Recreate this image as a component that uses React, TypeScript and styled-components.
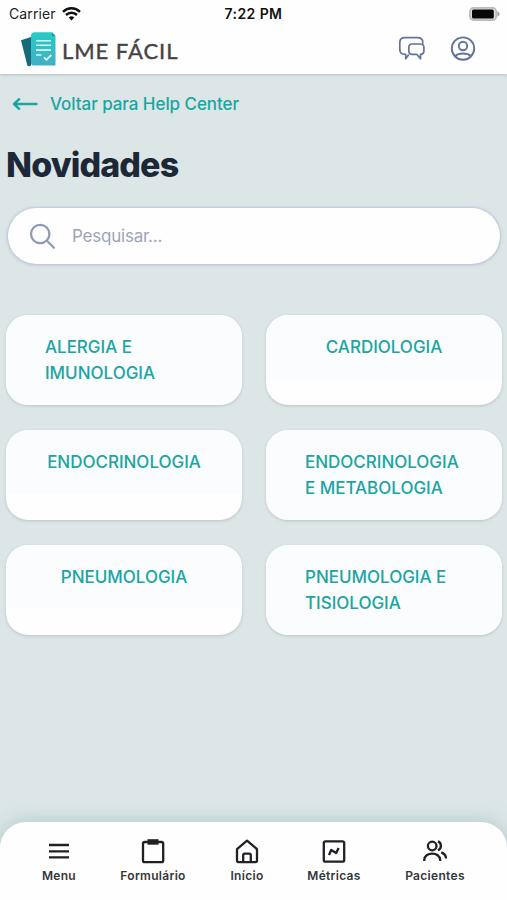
import React from 'react';
import styled, { createGlobalStyle } from 'styled-components';

const GlobalStyle = createGlobalStyle`
  * { box-sizing: border-box; }
  body { margin: 0; background: #dde6e7; font-family: Inter, "Liberation Sans", sans-serif; }
  svg { display: block; flex: none; }
`;

const Screen = styled.div`
  width: 507px;
  height: 900px;
  display: flex;
  flex-direction: column;
  overflow: hidden;
  background: #dde6e7;
`;

const Top = styled.header`
  height: 74px;
  flex: none;
  background: #fefefe;
  box-shadow: 0 1px 3px rgba(90, 110, 115, 0.32);
`;

const StatusBar = styled.div`
  height: 27px;
  display: grid;
  grid-template-columns: 1fr auto 1fr;
  align-items: center;
  padding: 0 7px 0 9px;
  color: #222;
  font-size: 14px;
`;

const Carrier = styled.div`
  display: flex;
  align-items: center;
  gap: 6px;
  letter-spacing: 0.1px;
`;

const Clock = styled.div`
  margin-right: 2px;
  font-weight: 600;
  letter-spacing: 0.4px;
  color: #111;
`;

const BatterySlot = styled.div`
  display: flex;
  justify-content: flex-end;
`;

const BrandBar = styled.div`
  height: 47px;
  display: flex;
  align-items: center;
  padding: 0 31px 3px 21px;
`;

const BrandName = styled.div`
  flex: 1;
  margin: 3px 0 0 6px;
  font-family: Lato, sans-serif;
  font-size: 22px;
  line-height: 30px;
  letter-spacing: 0.95px;
  color: #444;
  -webkit-text-stroke: 0.4px #444;
`;

const HeaderActions = styled.div`
  display: flex;
  gap: 24px;
`;

const Main = styled.main`
  flex: 1;
  padding: 0 5px 0 6px;
`;

const BackLink = styled.a`
  display: flex;
  align-items: center;
  gap: 12px;
  height: 24px;
  margin-top: 18px;
  padding-left: 6px;
  color: #1aa5a2;
  font-size: 17px;
  font-weight: 500;
  letter-spacing: -0.06px;
`;

const Title = styled.h1`
  margin: 27px 0 0;
  font-size: 34px;
  line-height: 44px;
  font-weight: 800;
  letter-spacing: -0.9px;
  color: #1c2838;
`;

const Search = styled.div`
  display: flex;
  align-items: center;
  gap: 16px;
  width: 492px;
  height: 56px;
  margin: 21px 0 0 2px;
  padding-left: 21px;
  border-radius: 28px;
  background: #fefefe;
  box-shadow: 0 0 2px 1px rgba(180, 191, 212, 0.7), 0 1px 4px rgba(100, 110, 160, 0.2);
  color: #9aa5b9;
  font-size: 17px;
  letter-spacing: -0.22px;
`;

const CardGrid = styled.div`
  display: grid;
  grid-template-columns: 236px 236px;
  grid-auto-rows: 90px;
  column-gap: 24px;
  row-gap: 25px;
  margin-top: 51px;
`;

const Card = styled.div`
  overflow: hidden;
  border-radius: 22px;
  background: #fefefe;
  box-shadow: 0 1px 3px rgba(70, 90, 95, 0.25);
`;

const CardLabel = styled.div<{ $lines: number }>`
  display: flex;
  justify-content: center;
  height: ${(p) => (p.$lines > 1 ? 90 : 64)}px;
  padding: 20px 39px 0;
  background: #fafcfd;
  color: #1aa5a2;
  font-size: 17px;
  font-weight: 500;
  line-height: 25.5px;
  letter-spacing: -0.02px;
`;

const CardText = styled.div<{ $lines: number }>`
  width: ${(p) => (p.$lines > 1 ? '158px' : 'auto')};
  flex: none;
  white-space: pre;
`;

const BottomNav = styled.nav`
  display: flex;
  flex: none;
  height: 78px;
  border-radius: 26px 26px 0 0;
  background: #fefefe;
  box-shadow: 0 -2px 18px rgba(140, 180, 178, 0.5);
`;

const NavItem = styled.a<{ $width: number; $start?: number }>`
  display: flex;
  flex-direction: column;
  align-items: center;
  width: ${(p) => p.$width}px;
  margin-left: ${(p) => p.$start ?? 0}px;
  padding-top: 16px;
  color: #202124;
`;

const NavLabel = styled.span`
  margin-top: 4px;
  font-size: 12px;
  line-height: 16px;
  font-weight: 600;
  letter-spacing: 0.3px;
  color: #35373a;
  white-space: nowrap;
`;

const Wifi = () => (
  <svg width="19" height="14" viewBox="0 0 19 14" fill="none" stroke="#111" strokeWidth="2.5">
    <path d="M1 4.8C5.8.2 13.2.2 18 4.8M4 8C7.1 5 11.9 5 15 8" />
    <path d="M6.7 10.6a4.1 4.1 0 0 1 5.6 0L9.5 13.6z" fill="#111" stroke="none" />
  </svg>
);

const Battery = () => (
  <svg width="31" height="14" viewBox="0 0 31 14">
    <rect x=".9" y=".9" width="26.4" height="12.2" rx="3.6" fill="#ddd" stroke="#bbb" strokeWidth="1.6" />
    <rect x="3" y="2.4" width="21.8" height="9.2" rx="1.6" fill="#080808" />
    <path d="M28.3 4.2c3 .9 3 4.7 0 5.6z" fill="#aaa" />
  </svg>
);

const Logo = () => (
  <svg width="35" height="35" viewBox="0 0 35 35">
    <defs>
      <linearGradient id="sheet" x1="0" y1="0" x2="0" y2="1">
        <stop stopColor="#27cbc4" />
        <stop offset="1" stopColor="#43afc7" />
      </linearGradient>
    </defs>
    <path d="M0 8.2 10 5v28.5l-1.5.8a2 2 0 0 1-2.3-1.3z" fill="#176b78" />
    <path d="M13.5.3H31L34.5 4v29.5H12a2 2 0 0 1-2-2V4A3.7 3.7 0 0 1 13.5.3z" fill="url(#sheet)" />
    <path d="M31 .3V4h3.5z" fill="#159da0" />
    <path d="M15 8.7h15M15 13.3h15M15 18.1h15M15 23h5.4" stroke="#d8fbf7" strokeWidth="1.6" />
    <path d="m23 25.3 2.5 2.5 4.8-5" fill="none" stroke="#effffb" strokeWidth="1.8" />
  </svg>
);

const Chats = () => (
  <svg width="28" height="26" viewBox="0 0 28 26" fill="none" stroke="#64739a" strokeWidth="1.7" strokeLinejoin="round">
    <path d="M10.8 18.4 7.7 22.8V18.3C3.5 18.3 1.8 17 1.8 13.4V6.6C1.8 3 3.2 1.6 6.8 1.6h12.8c3.6 0 5.2 1.4 5.2 5v1.2" />
    <path d="M14.3 8h8c2.4 0 3.6 1.1 3.6 3.5v3.2c0 2.4-1 3.6-3.4 3.6v4.5L18.8 18.3h-4.5c-2.4 0-3.5-1.2-3.5-3.6v-3.2c0-2.4 1.1-3.5 3.5-3.5z" />
  </svg>
);

const Profile = () => (
  <svg width="26" height="26" viewBox="0 0 26 26" fill="none" stroke="#64739a" strokeWidth="1.9">
    <circle cx="13" cy="12.6" r="11.2" />
    <circle cx="13" cy="10" r="4.2" />
    <path d="M4.8 20.2C8.7 16.6 17.3 16.6 21.2 20.2" />
  </svg>
);

const BackArrow = () => (
  <svg width="26" height="14" viewBox="0 0 26 14" fill="none" stroke="#1aa5a2" strokeWidth="2.4" strokeLinecap="round" strokeLinejoin="round">
    <path d="M24.5 7H2M7.2 2.2 2 7l5.2 4.8" />
  </svg>
);

const Magnifier = () => (
  <svg width="27" height="27" viewBox="0 0 27 27" fill="none" stroke="#8f9bb5" strokeWidth="2.3" strokeLinecap="round">
    <circle cx="11.2" cy="11" r="9.2" />
    <path d="m17.9 17.8 7 7" />
  </svg>
);

const navPaths: Record<string, React.ReactNode> = {
  menu: <path d="M3 7h20M3 13.3h20M3 19.4h20" />,
  form: (
    <>
      <rect x="3" y="4" width="20.2" height="20.2" rx="1.8" />
      <path d="M7.5 1.2h11v5.5h-11z" fill="currentColor" stroke="none" />
    </>
  ),
  home: <path d="M3 11.2 13 2.6l10 8.6v11.3c0 1-.6 1.6-1.6 1.6H4.6c-1 0-1.6-.6-1.6-1.6zM9.2 24v-6.8c0-.9.6-1.5 1.5-1.5h4.6c.9 0 1.5.6 1.5 1.5V24" />,
  metrics: (
    <>
      <rect x="2.8" y="3.3" width="20.4" height="20.4" rx="1.8" />
      <path d="m8 17 2.2-5 5 3 2.4-5" />
    </>
  ),
  patients: <path d="M10.2 12.3a4.3 4.3 0 1 0 0-8.6 4.3 4.3 0 0 0 0 8.6zM2.2 23v-.7c0-9 16-9 16 0v.7M15.9 3.4c4 1.3 4 7.2 0 8.8M19.2 14.3c3.2 1.2 4.8 3.1 4.8 6.1" />,
};

const NavIcon = ({ name }: { name: string }) => (
  <svg width="26" height="26" viewBox="0 0 26 26" fill="none" stroke="currentColor" strokeWidth="2.3" strokeLinejoin="round">
    {navPaths[name]}
  </svg>
);

const specialties = [
  ['ALERGIA E', 'IMUNOLOGIA'],
  ['CARDIOLOGIA'],
  ['ENDOCRINOLOGIA'],
  ['ENDOCRINOLOGIA', 'E METABOLOGIA'],
  ['PNEUMOLOGIA'],
  ['PNEUMOLOGIA E', 'TISIOLOGIA'],
];

const tabs = [
  { icon: 'menu', label: 'Menu', width: 78, start: 20 },
  { icon: 'form', label: 'Formulário', width: 110 },
  { icon: 'home', label: 'Início', width: 78 },
  { icon: 'metrics', label: 'Métricas', width: 96 },
  { icon: 'patients', label: 'Pacientes', width: 106 },
];

export default function App() {
  return (
    <Screen>
      <GlobalStyle />
      <Top>
        <StatusBar>
          <Carrier>Carrier <Wifi /></Carrier>
          <Clock>7:22 PM</Clock>
          <BatterySlot><Battery /></BatterySlot>
        </StatusBar>
        <BrandBar>
          <Logo />
          <BrandName>LME FÁCIL</BrandName>
          <HeaderActions>
            <Chats />
            <Profile />
          </HeaderActions>
        </BrandBar>
      </Top>
      <Main>
        <BackLink><BackArrow />Voltar para Help Center</BackLink>
        <Title>Novidades</Title>
        <Search><Magnifier />Pesquisar...</Search>
        <CardGrid>
          {specialties.map((lines) => (
            <Card key={lines.join(' ')}>
              <CardLabel $lines={lines.length}>
                <CardText $lines={lines.length}>{lines.join('\n')}</CardText>
              </CardLabel>
            </Card>
          ))}
        </CardGrid>
      </Main>
      <BottomNav>
        {tabs.map((tab) => (
          <NavItem key={tab.icon} $width={tab.width} $start={tab.start}>
            <NavIcon name={tab.icon} />
            <NavLabel>{tab.label}</NavLabel>
          </NavItem>
        ))}
      </BottomNav>
    </Screen>
  );
}
